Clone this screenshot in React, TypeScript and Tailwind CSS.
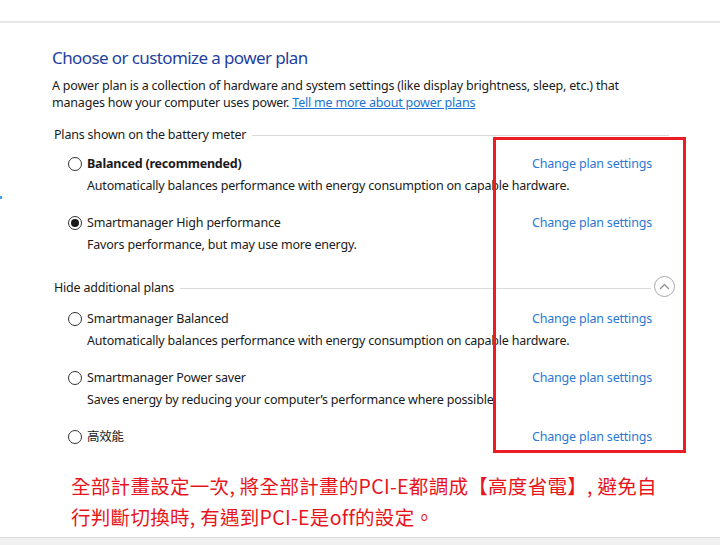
const plansShown = [
    {
        name: "Balanced (recommended)",
        desc: "Automatically balances performance with energy consumption on capable hardware.",
        bold: true,
        checked: false,
    },
    {
        name: "Smartmanager High performance",
        desc: "Favors performance, but may use more energy.",
        bold: false,
        checked: true,
    },
];

const plansHidden = [
    {
        name: "Smartmanager Balanced",
        desc: "Automatically balances performance with energy consumption on capable hardware.",
    },
    {
        name: "Smartmanager Power saver",
        desc: "Saves energy by reducing your computer\u2019s performance where possible.",
    },
    {
        name: "高效能",
        desc: "",
    },
];

function Radio({ checked }: { checked: boolean }) {
    return (
        <span className="flex h-[14px] w-[14px] shrink-0 items-center justify-center rounded-full border border-[#333333] bg-white">
            {checked && <span className="h-[8px] w-[8px] rounded-full bg-[#1a1a1a]" />}
        </span>
    );
}

function PlanRow({
    name,
    desc,
    bold,
    checked,
    first,
}: {
    name: string;
    desc: string;
    bold?: boolean;
    checked?: boolean;
    first?: boolean;
}) {
    return (
        <div className={first ? "" : "mt-[19px]"}>
            <div className="flex h-[18px] items-center">
                <div className="flex w-[480px] items-center gap-[5px] pl-[16px]">
                    <Radio checked={!!checked} />
                    <span
                        className={`text-[12.5px] leading-[18px] text-[#1a1a1a] ${bold ? "font-bold" : ""}`}
                    >
                        {name}
                    </span>
                </div>
                <a className="text-[12.5px] leading-[18px] text-[#2a78d4]">Change plan settings</a>
            </div>
            {desc && (
                <p className="mt-[4px] pl-[35px] text-[12.5px] leading-[18px] text-[#1a1a1a]">{desc}</p>
            )}
        </div>
    );
}

export default function App() {
    return (
        <div
            className="relative h-[545px] w-[720px] overflow-hidden bg-white tracking-[-0.2px]"
            style={{ fontFamily: "'Noto Sans', 'Noto Sans CJK TC', sans-serif" }}
        >
            {/* top strip */}
            <div className="h-[23px] border-b-2 border-[#e6e6e6]" />

            {/* tiny marker on left edge */}
            <div className="absolute left-0 top-[196px] h-[3px] w-[2px] bg-[#3aa0f0]" />

            <div className="pl-[52px] pt-[23px]">
                <h1 className="text-[17px] leading-[24px] tracking-[-0.6px] text-[#1f3f9f]">
                    Choose or customize a power plan
                </h1>
                <p className="mt-[7px] w-[600px] text-[12.5px] leading-[17px] text-[#1a1a1a]">
                    A power plan is a collection of hardware and system settings (like display brightness, sleep,
                    etc.) that
                    <br />
                    manages how your computer uses power.{" "}
                    <a className="text-[#1b73d6] underline">Tell me more about power plans</a>
                </p>

                {/* battery meter plans */}
                <div className="mt-[15px] flex h-[18px] items-center pl-[2px] pr-[51px]">
                    <span className="text-[12.5px] leading-[18px] text-[#1a1a1a]">
                        Plans shown on the battery meter
                    </span>
                    <span className="ml-[6px] h-px flex-1 bg-[#d9d9d9]" />
                </div>

                <div className="mt-[11px]">
                    {plansShown.map((p, i) => (
                        <PlanRow key={i} {...p} first={i === 0} />
                    ))}
                </div>

                {/* hidden plans */}
                <div className="mt-[25px] flex h-[18px] items-center pl-[2px] pr-[45px]">
                    <span className="text-[12.5px] leading-[18px] text-[#1a1a1a]">Hide additional plans</span>
                    <span className="ml-[6px] h-px flex-1 bg-[#d9d9d9]" />
                    <span className="ml-[3px] -mt-[3px] flex h-[21px] w-[21px] items-center justify-center rounded-full border border-[#a6a6a6]">
                        <svg width="11" height="7" viewBox="0 0 11 7" fill="none">
                            <path d="M1 6 L5.5 1.5 L10 6" stroke="#8a8a8a" strokeWidth="1.2" />
                        </svg>
                    </span>
                </div>

                <div className="mt-[13px]">
                    {plansHidden.map((p, i) => (
                        <PlanRow key={i} {...p} first={i === 0} />
                    ))}
                </div>

                {/* note */}
                <p
                    className="mt-[24px] pl-[19px] text-[19.5px] leading-[31px] tracking-[0.3px] text-[#e8141c]"
                    style={{ fontFamily: "'Noto Sans CJK TC', sans-serif" }}
                >
                    全部計畫設定一次, 將全部計畫的PCI-E都調成【高度省電】, 避免自
                    <br />
                    行判斷切換時, 有遇到PCI-E是off的設定。
                </p>
            </div>

            {/* bottom strip */}
            <div className="absolute bottom-0 left-0 h-[8px] w-full border-t border-[#dcdcdc] bg-[#f0f0f0]" />

            {/* red highlight box */}
            <div className="absolute left-[493px] top-[137px] h-[316px] w-[193px] border-[3.5px] border-[#ec1c24]" />
        </div>
    );
}
